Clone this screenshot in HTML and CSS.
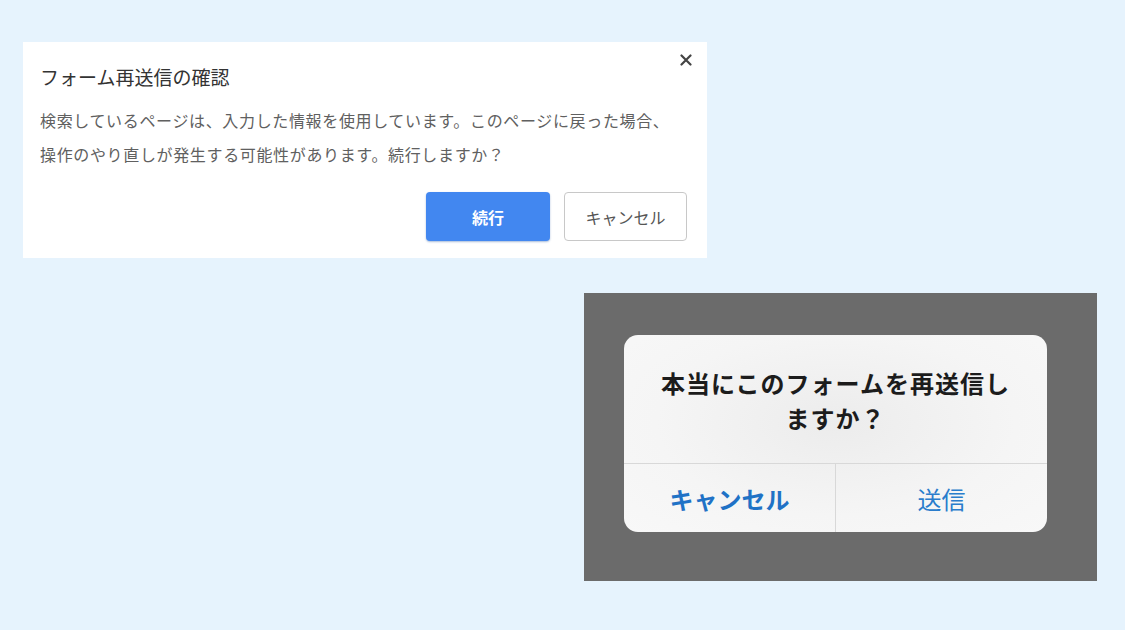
FILE: index.html
```html
<!DOCTYPE html>
<html lang="ja">
<head>
    <meta charset="UTF-8">
    <meta name="viewport" content="width=device-width, initial-scale=1.0">
    <title>フォーム再送信の確認</title>
    <link rel="stylesheet" href="styles.css">
</head>
<body>
<div class="page">
    <div class="chrome-dialog">
        <button class="close-button" aria-label="閉じる">
            <svg width="12" height="12" viewBox="0 0 12 12">
                <path d="M1.5 1.5 L10.5 10.5 M10.5 1.5 L1.5 10.5" stroke="#444" stroke-width="2.2" stroke-linecap="round"/>
            </svg>
        </button>
        <h2 class="chrome-title">フォーム再送信の確認</h2>
        <p class="chrome-text">検索しているページは、入力した情報を使用しています。このページに戻った場合、<br>操作のやり直しが発生する可能性があります。続行しますか？</p>
        <div class="chrome-actions">
            <button class="chrome-btn primary">続行</button>
            <button class="chrome-btn secondary">キャンセル</button>
        </div>
    </div>

    <div class="ios-screen">
        <div class="ios-alert">
            <div class="ios-message">本当にこのフォームを再送信し<br>ますか？</div>
            <div class="ios-actions">
                <button class="ios-btn cancel">キャンセル</button>
                <button class="ios-btn send">送信</button>
            </div>
        </div>
    </div>
</div>
</body>
</html>
```

FILE: styles.css
```css
body {
    margin: 0;
    background-color: #e6f3fd;
    font-family: "Noto Sans CJK JP", "Noto Sans", sans-serif;
    width: 1125px;
    height: 630px;
    overflow: hidden;
}
.page {
    display: flex;
    flex-direction: column;
    padding: 42px 0 0 23px;
}
.chrome-dialog {
    position: relative;
    width: 684px;
    height: 216px;
    box-sizing: border-box;
    background-color: #ffffff;
    padding: 21px 20px 0 17px;
}
.close-button {
    position: absolute;
    top: 12px;
    right: 15px;
    border: none;
    background: none;
    padding: 0;
    width: 12px;
    height: 12px;
    display: flex;
}
.chrome-title {
    margin: 0;
    font-size: 19px;
    line-height: 28px;
    font-weight: 400;
    color: #333333;
}
.chrome-text {
    margin: 12px 0 0 0;
    font-size: 16px;
    line-height: 34px;
    color: #606060;
    letter-spacing: 0.65px;
}
.chrome-actions {
    display: flex;
    justify-content: flex-end;
    gap: 14px;
    margin-top: 21px;
}
.chrome-btn {
    width: 124px;
    height: 49px;
    border-radius: 4px;
    font-family: "Noto Sans CJK JP", sans-serif;
    font-size: 16px;
    cursor: pointer;
}
.chrome-btn.primary {
    background-color: #4287f0;
    border: none;
    color: #ffffff;
    font-weight: 700;
    box-shadow: 0 1px 2px rgba(40, 90, 160, 0.4);
}
.chrome-btn.secondary {
    background-color: #ffffff;
    border: 1px solid #c8c8c8;
    color: #555555;
    width: 123px;
}
.ios-screen {
    margin: 35px 0 0 561px;
    width: 513px;
    height: 288px;
    background-color: #6b6b6b;
    display: flex;
    align-items: flex-start;
    padding: 42px 0 0 40px;
    box-sizing: border-box;
}
.ios-alert {
    width: 423px;
    height: 197px;
    border-radius: 14px;
    background: radial-gradient(ellipse at 50% 45%, #ececec 0%, #f5f5f5 60%, #f8f8f8 100%);
    display: flex;
    flex-direction: column;
    overflow: hidden;
}
.ios-message {
    height: 128px;
    box-sizing: border-box;
    padding-top: 30px;
    text-align: center;
    font-size: 24px;
    font-weight: 700;
    line-height: 35px;
    letter-spacing: 1px;
    color: #1c1c1c;
}
.ios-actions {
    display: flex;
    flex: 1;
    border-top: 1px solid #d8d8d8;
}
.ios-btn {
    flex: 1;
    border: none;
    background: none;
    font-family: "Noto Sans CJK JP", sans-serif;
    font-size: 24px;
    color: #2a7dcc;
    cursor: pointer;
    padding: 0;
}
.ios-btn.cancel {
    font-weight: 700;
    color: #1f72c6;
    flex: 0 0 212px;
    border-right: 1px solid #d8d8d8;
}
```
